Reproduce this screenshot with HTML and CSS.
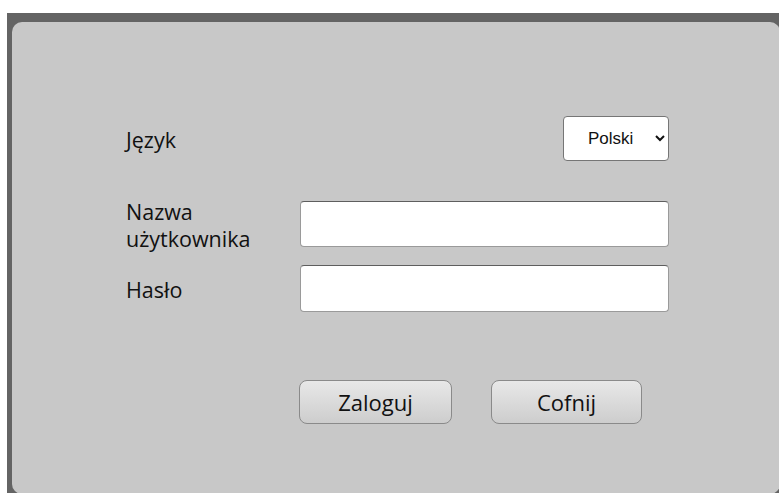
FILE: index.html
```html
<!DOCTYPE html>
<html lang="pl">
<head>
<meta charset="utf-8">
<title>Logowanie</title>
<link rel="stylesheet" href="styles.css">
</head>
<body>
<div class="frame">
  <div class="panel">
    <form class="login">
      <div class="row row-lang">
        <label class="label" for="lang">Język</label>
        <select id="lang" class="lang-select">
          <option>Polski</option>
          <option>English</option>
        </select>
      </div>
      <div class="row row-user">
        <label class="label" for="user">Nazwa użytkownika</label>
        <input id="user" class="field" type="text">
      </div>
      <div class="row row-pass">
        <label class="label" for="pass">Hasło</label>
        <input id="pass" class="field" type="password">
      </div>
      <div class="actions">
        <button type="button" class="btn">Zaloguj</button>
        <button type="button" class="btn">Cofnij</button>
      </div>
    </form>
  </div>
</div>
</body>
</html>
```
FILE: styles.css
```css
html, body {
  margin: 0;
  height: 100%;
  overflow: hidden;
  background: #ffffff;
}

body {
  font-family: "Open Sans", "Noto Sans", sans-serif;
  color: #111111;
}

.frame {
  margin: 13px 0 0 7px;
  padding: 9px 0 0 5px;
  height: 100%;
  background: #646464;
}

.panel {
  width: 768px;
  height: 472px;
  background: #c8c8c8;
  border-radius: 10px;
  padding: 94px 0 0 114px;
  box-sizing: border-box;
}

.login {
  width: 543px;
}

.row {
  display: flex;
  align-items: center;
}

.label {
  width: 174px;
  padding-right: 30px;
  box-sizing: border-box;
  font-size: 21.5px;
  line-height: 27px;
  flex: none;
}

.row-lang {
  justify-content: space-between;
  height: 45px;
}

.row-lang .label {
  margin-top: 2px;
}

.lang-select {
  width: 106px;
  height: 45px;
  background: #ffffff;
  border: 1px solid #767676;
  border-radius: 4px;
  font-family: "Liberation Sans", Arial, sans-serif;
  font-size: 17px;
  color: #111111;
  padding: 0 0 0 20px;
}

/* two-line label hangs below the field without growing the row */
.row-user {
  margin-top: 40px;
  height: 46px;
  align-items: flex-start;
}

.row-user .label {
  margin-top: -3px;
}

.row-pass {
  margin-top: 18px;
}

.row-pass .label {
  margin-top: 2px;
}

.field {
  width: 369px;
  height: 46px;
  box-sizing: border-box;
  background: #ffffff;
  border: 1px solid #9a9a9a;
  border-top-color: #5e5e5e;
  border-radius: 4px;
  margin: 0;
  padding: 0 8px;
  font-size: 16px;
}

.row-pass .field {
  height: 47px;
}

.actions {
  display: flex;
  gap: 39px;
  margin-top: 68px;
  padding-left: 173px;
}

.btn {
  width: 153px;
  height: 44px;
  border: 1px solid #8a8a8a;
  border-radius: 8px;
  background: linear-gradient(#e8e8e8, #cdcdcd);
  font-family: "Open Sans", "Noto Sans", sans-serif;
  font-size: 22px;
  color: #111111;
  padding: 0;
}

.btn + .btn {
  width: 151px;
}
```
